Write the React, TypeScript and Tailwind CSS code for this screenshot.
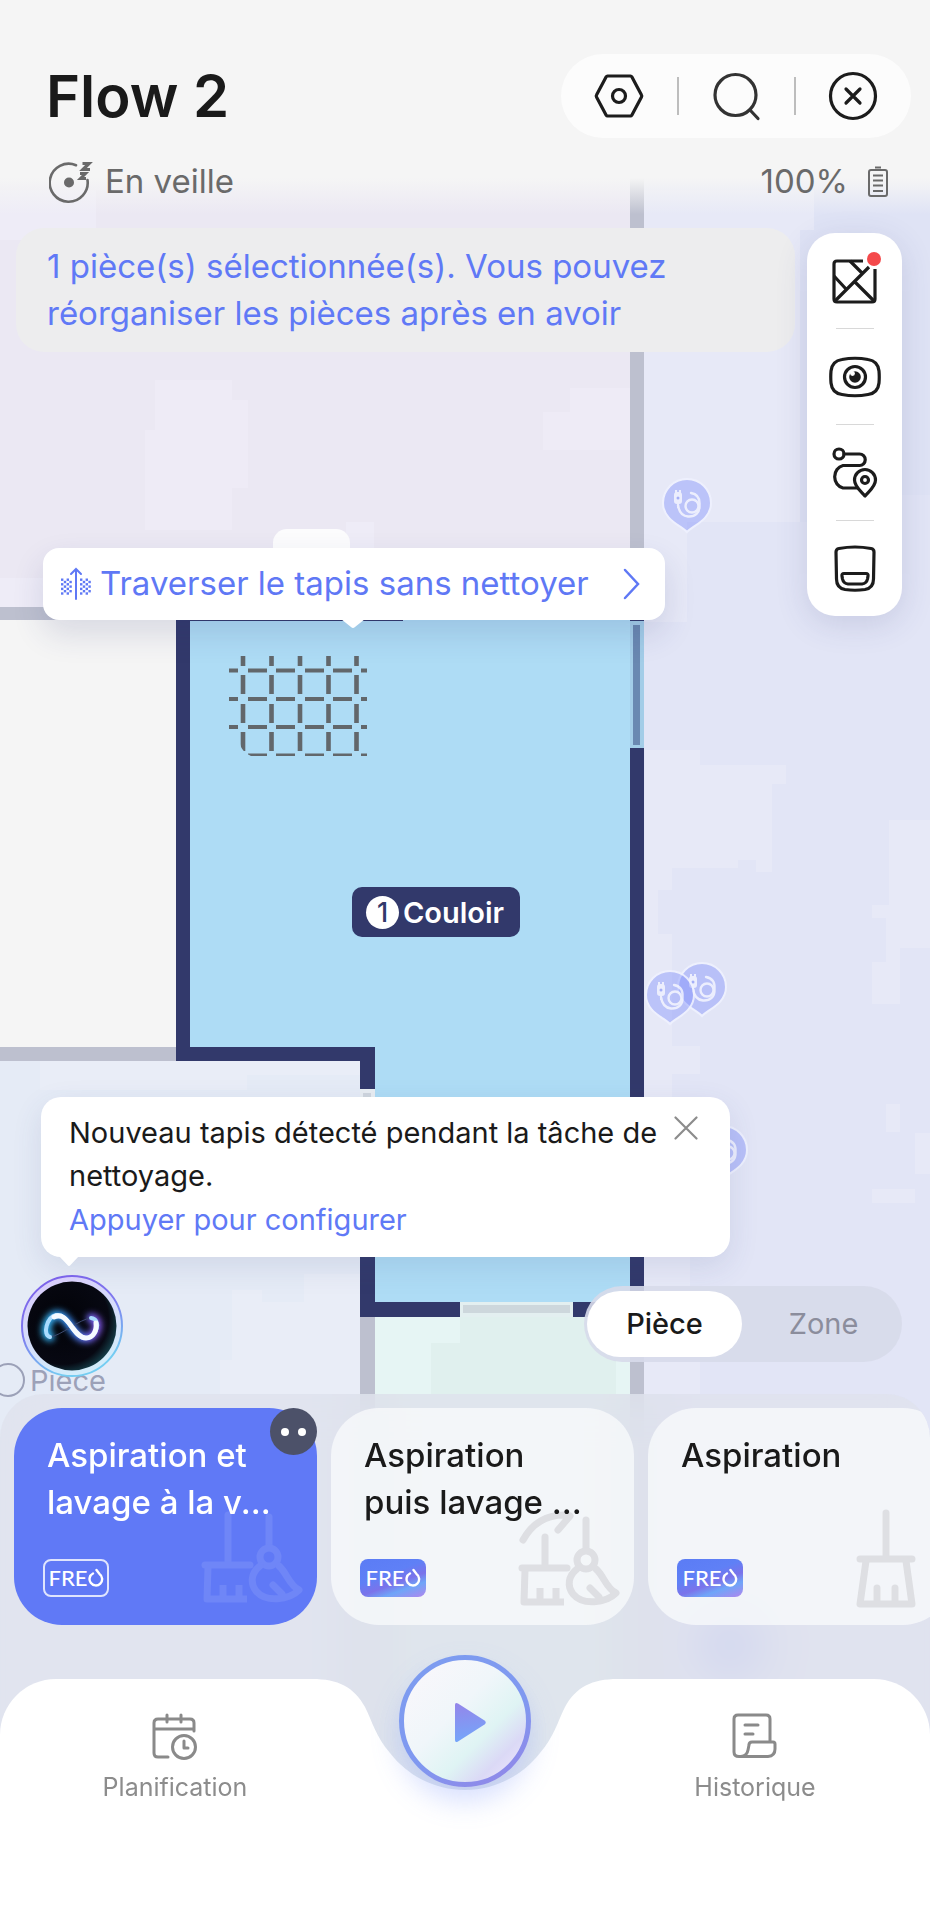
import React from "react";

const NAVY = "#32396b";
const WALL = "#bdc0cf";

function CablePin({ x, y }: { x: number; y: number }) {
  return (
    <g transform={`translate(${x} ${y})`} opacity="0.85">
      <path
        d="M0 28C-5 22-24 16-24-1A24 24 0 1 1 24-1C24 16 5 22 0 28Z"
        fill="#8090fb"
        fillOpacity="0.5"
        stroke="#f0f2ff"
        strokeWidth="2"
      />
      <g fill="none" stroke="#eef0ff" strokeWidth="2.4" strokeLinecap="round">
        <circle cx="5" cy="2" r="6.5" />
        <path d="M4-11C10-10 13-6 12.500 1C13 9 8 13 1 12.500C-5 12-8 8-9 1" />
      </g>
      <rect x="-13" y="-12" width="8" height="12" rx="3" fill="#eef0ff" />
      <path d="M-11-14V-11M-7-14V-11M-9 0V4" stroke="#eef0ff" strokeWidth="2" />
      <circle cx="-9" cy="-6" r="1.500" fill="#9aa6f8" />
    </g>
  );
}

function FloorMap() {
  const columns = [243, 271.5, 300, 328.5, 356.5];
  const rows = [670.5, 699, 727];
  return (
    <svg
      className="absolute inset-0 h-full w-full"
      viewBox="0 0 930 1920"
      preserveAspectRatio="xMinYMin slice"
      aria-hidden="true"
    >
      <defs>
        <clipPath id="rug">
          <path d="M229 656H367V756H251C246 754 241 749 240 744H229Z" />
        </clipPath>
      </defs>
      <rect width="930" height="1920" fill="#e2e5f6" />

      <rect width="630" height="607" fill="#ebe8f3" />
      <path d="M155 380H232V400H248V488H232V530H145V430H155Z" fill="#eeebf6" />
      <path d="M570 388H630V450H543V412H570Z" fill="#eeebf6" />
      <path d="M0 190H96V240H0Z M346 522H374V560H346Z M0 578H60V607H0Z" fill="#eeecf7" />

      <path
        d="M644 190H814V230H806V495H844V522H687V622H644Z M645 750H700V765H786V784H772V872H756V860H738V868H672V890H658V934H672V1046H700V1074H672V1195H690V1290H700V1394H644Z"
        fill="#e7e9f7"
      />
      <path
        d="M889 820H930V948H900V1004H872V962H886V918H872V905H889Z M886 1104H900V1132H886Z M915 1133H930V1174H915Z M872 1189H915V1203H872Z"
        fill="#e7e9f7"
      />
      <path d="M814 190H930V495H844V522H800V230H814Z" fill="#dfe3f5" />

      <rect y="620" width="176" height="427" fill="#f5f5f5" />
      <rect y="1061" width="360" height="860" fill="#e5ebf6" />
      <path
        d="M247 1075H360V1061H40V1090H247Z M304 1274H360V1394H220V1360H232V1290H262V1302H304Z"
        fill="#e9edf7"
      />
      <rect x="375" y="1302" width="255" height="620" fill="#e0f0ee" />
      <path d="M375 1317H460V1343H431V1394H375Z M616 1317H630V1394H616Z" fill="#e6f5f4" />

      <g fill={WALL}>
        <rect x="630" width="14" height="620" />
        <rect y="607" width="176" height="13" />
        <rect y="1047" width="176" height="14" />
        <rect x="360" y="1317" width="15" height="603" />
        <rect x="630" y="1317" width="14" height="603" />
      </g>

      <path d="M190 620H644V1302H375V1047H190Z" fill="#aedcf5" />
      <path d="M176 607H403V621H190V1047H375V1089H360V1061H176Z" fill={NAVY} />
      <path
        d="M630 748H644V1317H573V1302H630Z M360 1250H375V1302H460V1317H360Z M630 618H644V621H630Z"
        fill={NAVY}
      />
      <rect x="630" y="621" width="14" height="127" fill="#a3cde8" />
      <rect x="633" y="625" width="7" height="120" fill="#6a88b1" />
      <rect x="360" y="1089" width="15" height="161" fill="#e8edf2" />
      <rect x="363" y="1093" width="8" height="150" fill="#cfd6de" />
      <rect x="460" y="1302" width="113" height="15" fill="#e3eff0" />
      <rect x="463" y="1305" width="107" height="8" fill="#cdd7dc" />

      <g clipPath="url(#rug)" fill="#62676b">
        {columns.map((x) => (
          <g key={x}>
            <rect x={x - 2.3} y="656" width="4.6" height="10" />
            <rect x={x - 2.3} y="675" width="4.6" height="19" />
            <rect x={x - 2.3} y="704" width="4.6" height="19" />
            <rect x={x - 2.3} y="732" width="4.6" height="19" />
          </g>
        ))}
        {[...rows, 755.5].map((y) => (
          <g key={y}>
            <rect x="229" y={y - 2} width="9" height="4" />
            <rect x="248" y={y - 2} width="19" height="4" />
            <rect x="276" y={y - 2} width="19" height="4" />
            <rect x="305" y={y - 2} width="19" height="4" />
            <rect x="333" y={y - 2} width="19" height="4" />
            <rect x="361" y={y - 2} width="6" height="4" />
          </g>
        ))}
      </g>

      <CablePin x={687} y={504} />
      <CablePin x={702} y={988} />
      <CablePin x={670} y={996} />
      <CablePin x={723} y={1151} />
      <circle cx="730" cy="1645" r="34" fill="#aab4fa" />
      <circle cx="8" cy="1380" r="16" fill="none" stroke="#9ca1b8" strokeWidth="2" />
    </svg>
  );
}

function CarpetCrossIcon() {
  const dots: [number, number][] = [];
  for (let r = 0; r < 7; r++) for (let c = 0; c < 4; c++) if ((r + c) % 2 === 0) dots.push([c, r]);
  return (
    <svg className="shrink-0" width="32" height="34" viewBox="0 0 32 34" aria-hidden="true">
      <path d="M16 32V2M11 7L16 2L21 7" fill="none" stroke="#5f78f5" strokeWidth="2" strokeLinecap="round" />
      {dots.map(([c, r]) => (
        <g key={`${c}-${r}`} fill="#5f78f5">
          <rect x={1 + c * 2.8} y={11.5 + r * 2.3} width="2.400" height="2.400" />
          <rect x={20 + c * 2.8} y={11.5 + r * 2.3} width="2.400" height="2.400" />
        </g>
      ))}
    </svg>
  );
}

function SleepIcon() {
  return (
    <svg width="44" height="44" viewBox="0 0 44 44" fill="none" stroke="#6a6a6a" aria-hidden="true">
      <path d="M27 5.200A19 19 0 1 0 38.500 20" strokeWidth="2.600" strokeLinecap="round" />
      <circle cx="20" cy="22.500" r="5" fill="#6a6a6a" stroke="none" />
      <path d="M33.500 3.500H40L34 9.500H41" strokeWidth="3.200" />
      <path d="M31 13.500H36.500L31.500 18.500H37" strokeWidth="3" />
    </svg>
  );
}

function BatteryIcon() {
  return (
    <svg width="20" height="32" viewBox="0 0 20 32" fill="none" stroke="#6a6a6a" strokeWidth="2" aria-hidden="true">
      <path d="M7 1.500H13" />
      <rect x="1" y="4" width="18" height="26" rx="2" />
      <path d="M5 9.500H15M5 14.500H15M5 19.500H15M5 25H15" />
    </svg>
  );
}

const iconProps = {
  width: 52,
  height: 52,
  viewBox: "0 0 52 52",
  fill: "none",
  stroke: "#1c1c1c",
  strokeWidth: 3.2,
  strokeLinecap: "round" as const,
  strokeLinejoin: "round" as const,
  "aria-hidden": true,
};

function HexIcon() {
  return (
    <svg {...iconProps}>
      <path d="M14.500 6H37.500C38 6 38.500 6.300 38.800 6.800L48.500 25C48.900 25.700 48.900 26.300 48.500 27L38.800 45.200C38.500 45.700 38 46 37.500 46H14.500C14 46 13.500 45.700 13.200 45.200L3.500 27C3.100 26.300 3.100 25.700 3.500 25L13.200 6.800C13.500 6.300 14 6 14.500 6Z" />
      <circle cx="26" cy="26" r="6.500" />
    </svg>
  );
}

function SearchIcon() {
  return (
    <svg {...iconProps} stroke="#333333">
      <circle cx="25.500" cy="25" r="20.500" />
      <path d="M40 40L48 48.500" />
    </svg>
  );
}

function CloseCircleIcon() {
  return (
    <svg {...iconProps}>
      <circle cx="26" cy="26" r="22.500" />
      <path d="M19 19L33 33M33 19L19 33" />
    </svg>
  );
}

function MapIcon() {
  return (
    <svg {...iconProps}>
      <path d="M34 6H8C6 6 5 7 5 9V44C5 46 6 47 8 47H43C45 47 46 46 46 44V14" strokeLinecap="butt" />
      <path d="M6 46L40 12M21 6L33 18M5 21L17 34M25 26L45 46" strokeLinecap="butt" />
    </svg>
  );
}

function CameraIcon() {
  return (
    <svg {...iconProps}>
      <path d="M13 8.500Q26 6 39 8.500Q49 10 50 20Q50.500 26 50 32Q49 42 39 43.500Q26 46 13 43.500Q3 42 2 32Q1.500 26 2 20Q3 10 13 8.500Z" />
      <circle cx="26" cy="26" r="10.500" />
      <circle cx="26" cy="26" r="5.800" fill="#1c1c1c" stroke="none" />
      <circle cx="23.500" cy="22.500" r="2.400" fill="#ffffff" stroke="none" />
    </svg>
  );
}

function RouteIcon() {
  return (
    <svg {...iconProps}>
      <circle cx="10" cy="7" r="5" />
      <path d="M15 7H30.500A5.500 5.500 0 0 1 30.500 18.500H14A10.500 11.500 0 0 0 14 41H28" />
      <path d="M36 49C33 45 25.500 40 25.500 33A10.500 10.500 0 0 1 46.500 33C46.500 40 39 45 36 49Z" fill="#ffffff" />
      <circle cx="36" cy="33" r="3.500" />
    </svg>
  );
}

function DockIcon() {
  return (
    <svg {...iconProps}>
      <path d="M10 5.500Q26 2.500 42 5.500Q45 6 45 9L44.500 36Q44.500 45 36 46.500Q26 48 16 46.500Q7.500 45 7.500 36L7 9Q7 6 10 5.500Z" />
      <path d="M15 30.500H37Q39.500 30.500 39 33L38.500 36Q37.500 40.500 33 41H19Q14.500 40.500 13.500 36L13 33Q12.500 30.500 15 30.500Z" />
    </svg>
  );
}

function FreoBadge({ outlined }: { outlined?: boolean }) {
  return (
    <span
      className={
        outlined
          ? "flex h-[38px] w-[66px] items-center justify-center rounded-lg border-2 border-white/80 text-white"
          : "flex h-[38px] w-[66px] items-center justify-center rounded-lg bg-[linear-gradient(160deg,#5b7cf5_0%,#5f80f6_40%,#7b73ea_60%,#6fa5f8_75%,#b086ee_100%)] text-white"
      }
    >
      <span className="font-['Lato',sans-serif] text-[22px] leading-none font-medium">FRE</span>
      <svg width="16" height="20" viewBox="0 0 16 20" fill="none" stroke="currentColor" strokeWidth="2.400" aria-hidden="true">
        <path d="M5 5.500A6.300 6.300 0 1 0 11.500 6L8.500 2" strokeLinecap="round" />
      </svg>
    </span>
  );
}

function BroomMopIcon({ curved }: { curved?: boolean }) {
  return (
    <svg
      width="104"
      height="98"
      viewBox="0 0 104 98"
      fill="none"
      stroke="currentColor"
      strokeWidth="7"
      strokeLinejoin="round"
      aria-hidden="true"
    >
      {curved && <path d="M5 30C15 12 30 5 46 5M52 6L40 20" strokeLinecap="round" />}
      <path d={curved ? "M27 27V57" : "M27 8V57"} strokeLinecap="round" />
      <path d="M4 58H49" strokeLinecap="round" />
      <path d="M7 60L6 92H46M22 92V78M38 92V78" />
      <path d="M68 10V40" strokeLinecap="round" />
      <circle cx="68" cy="50" r="9" />
      <path d="M59 59C50 66 49 76 55 84C65 96 88 93 98 83C88 78 86 66 78 59M72 78L81 87" strokeLinecap="round" />
    </svg>
  );
}

function BroomIcon() {
  return (
    <svg
      width="62"
      height="100"
      viewBox="0 0 62 100"
      fill="none"
      stroke="currentColor"
      strokeWidth="7"
      strokeLinejoin="round"
      aria-hidden="true"
    >
      <path d="M31 5V50M5 51H57" strokeLinecap="round" />
      <path d="M11 53L5 96H57L51 53M22 95V80M40 95V80" strokeLinecap="round" />
    </svg>
  );
}

function CalendarIcon() {
  return (
    <svg width="48" height="48" viewBox="0 0 48 48" fill="none" stroke="#8a8a8a" strokeWidth="3" strokeLinecap="round" strokeLinejoin="round" aria-hidden="true">
      <path d="M17 44H7Q3 44 3 40V10Q3 6 7 6H39Q43 6 43 10V18M3 16H43M16 2V9M30 2V9" />
      <circle cx="33" cy="34" r="11.500" />
      <path d="M33 28V35H37" />
    </svg>
  );
}

function HistoryIcon() {
  return (
    <svg width="48" height="48" viewBox="0 0 48 48" fill="none" stroke="#8a8a8a" strokeWidth="3" strokeLinecap="round" strokeLinejoin="round" aria-hidden="true">
      <path d="M39 28V6Q39 2 35 2H7Q3 2 3 6V39Q3 43.500 8 43.500H37Q44 43 44 36V31Q44 29 42 29H21Q18 29 18 32L17 37Q16 43 10 43.500" />
      <path d="M14 12H27M14 21H22" />
    </svg>
  );
}

function Avatar() {
  return (
    <button aria-label="Assistant" className="h-[102px] w-[102px] shrink-0 rounded-full">
      <svg width="102" height="102" viewBox="0 0 102 102" aria-hidden="true">
        <defs>
          <linearGradient id="ring" x1="0" y1="0" x2="0.4" y2="1">
            <stop offset="0" stopColor="#7a5be8" />
            <stop offset="0.5" stopColor="#7f78ee" />
            <stop offset="1" stopColor="#74cdf2" />
          </linearGradient>
          <linearGradient id="halo" x1="0" y1="0" x2="0.4" y2="1">
            <stop offset="0" stopColor="#d9c9fb" />
            <stop offset="1" stopColor="#d3ecfa" />
          </linearGradient>
          <radialGradient id="face" cx="0.4" cy="0.42" r="0.68">
            <stop offset="0" stopColor="#020308" />
            <stop offset="0.75" stopColor="#070812" />
            <stop offset="1" stopColor="#1a5560" />
          </radialGradient>
          <linearGradient id="loop" x1="0" y1="0" x2="1" y2="0">
            <stop offset="0" stopColor="#35b8f5" />
            <stop offset="0.5" stopColor="#3d8dff" />
            <stop offset="1" stopColor="#8a5cf6" />
          </linearGradient>
          <filter id="glow" x="-30%" y="-60%" width="160%" height="220%">
            <feGaussianBlur stdDeviation="3" />
          </filter>
        </defs>
        <circle cx="51" cy="51" r="50" fill="url(#halo)" stroke="url(#ring)" strokeWidth="2" />
        <circle cx="51" cy="51" r="44.500" fill="url(#face)" />
        <g fill="none" strokeLinecap="round">
          <path d="M29 62C21 60 26 42 35 40C48 38 51 63 65 63C76 63 81 44 70 43" stroke="url(#loop)" strokeWidth="9" filter="url(#glow)" />
          <path d="M29 62C40 61 58 44 70 43" stroke="#3d4a70" strokeWidth="1" />
          <path d="M29 62C21 60 26 42 35 40C48 38 51 63 65 63C76 63 81 44 70 43" stroke="#a9dcff" strokeWidth="4" />
          <path d="M33 42C47 35 52 63 65 63C72 63 76 56 75 48" stroke="#f5faff" strokeWidth="5" />
        </g>
      </svg>
    </button>
  );
}

const modes = [
  { id: "both", lines: ["Aspiration et", "lavage à la v..."], active: true },
  { id: "then", lines: ["Aspiration", "puis lavage ..."], active: false },
  { id: "vacuum", lines: ["Aspiration"], active: false },
];

export default function App() {
  return (
    <div className="relative flex min-h-screen w-full flex-col overflow-hidden bg-[#e2e5f6] font-['Inter',sans-serif] text-[#1a1a1a]">
      <div className="absolute inset-0">
        <FloorMap />
        <span className="absolute top-[1364px] left-[30px] text-[29px] leading-[34px] text-[#9ca1b8]">Pièce</span>
        <div className="absolute top-[887px] left-[352px] flex h-[50px] items-center gap-1 rounded-[10px] bg-[#32396b] pr-4 pl-3.5 text-white">
          <span className="flex h-[33px] w-[33px] items-center justify-center rounded-full bg-white text-[27px] leading-none font-medium text-[#32396b]">
            1
          </span>
          <span className="text-[29px] leading-none font-semibold">Couloir</span>
        </div>
        <div className="absolute top-[529px] left-[273px] h-[40px] w-[77px] rounded-[14px] bg-[#fcfcfd]" />
        <div className="absolute top-[548px] left-[43px]">
          <button className="flex h-[72px] w-[622px] items-center gap-2 rounded-2xl bg-white pr-6 pl-[17px] text-[33px] text-[#5f78f5] shadow-[0_14px_32px_rgba(40,50,110,0.14)]">
            <CarpetCrossIcon />
            <span className="flex-1 text-left whitespace-nowrap">Traverser le tapis sans nettoyer</span>
            <svg className="shrink-0" width="18" height="32" viewBox="0 0 18 32" fill="none" stroke="currentColor" strokeWidth="2.500" aria-hidden="true">
              <path d="M2 2L15 16L2 30" strokeLinecap="round" />
            </svg>
          </button>
          <svg className="absolute top-[71px] left-[298px]" width="24" height="10" viewBox="0 0 24 10" aria-hidden="true">
            <path d="M0 0H24L14 8Q12 10 10 8Z" fill="#ffffff" />
          </svg>
        </div>
      </div>

      <header className="relative bg-[linear-gradient(#f5f5f5_0%,#f5f5f5_78%,rgba(245,245,245,0)_94%)] pt-[54px] pb-6">
        <div className="flex h-[84px] items-center justify-between pr-[19px] pl-[46px]">
          <h1 className="text-[58px] leading-none font-semibold">Flow 2</h1>
          <div className="flex h-[84px] w-[350px] items-center justify-between rounded-full bg-[#fcfcfc] px-8">
            <button aria-label="Réglages">
              <HexIcon />
            </button>
            <span className="h-[38px] w-0.5 bg-[#bdbdbd]" />
            <button aria-label="Rechercher">
              <SearchIcon />
            </button>
            <span className="h-[38px] w-0.5 bg-[#bdbdbd]" />
            <button aria-label="Fermer">
              <CloseCircleIcon />
            </button>
          </div>
        </div>
        <div className="mt-[22px] flex h-[44px] items-center justify-between pr-[42px] pl-[49px] text-[33px] text-[#6a6a6a]">
          <span className="flex items-center gap-3">
            <SleepIcon />
            En veille
          </span>
          <span className="flex items-center gap-5">
            100%
            <BatteryIcon />
          </span>
        </div>
      </header>

      <div className="relative flex items-start gap-3 pr-7 pl-4">
        <p className="flex-1 rounded-[28px] bg-[#ededee] px-[31px] py-[15px] text-[33px] leading-[47px] text-[#6079f6]">
          1 pièce(s) sélectionnée(s). Vous pouvez réorganiser les pièces après en avoir
        </p>
        <div className="mt-[5px] flex w-[95px] flex-col items-center rounded-[28px] bg-white shadow-[0_8px_32px_rgba(60,70,130,0.16)]">
          <button aria-label="Carte" className="relative flex h-[95px] items-center">
            <MapIcon />
            <span className="absolute top-[19px] right-0 h-[14px] w-[14px] rounded-full bg-[#f4494b]" />
          </button>
          <span className="h-px w-[38px] bg-[#d8d8d8]" />
          <button aria-label="Caméra" className="flex h-[95px] items-center">
            <CameraIcon />
          </button>
          <span className="h-px w-[38px] bg-[#d8d8d8]" />
          <button aria-label="Trajet" className="flex h-[95px] items-center">
            <RouteIcon />
          </button>
          <span className="h-px w-[38px] bg-[#d8d8d8]" />
          <button aria-label="Station" className="flex h-[95px] items-center">
            <DockIcon />
          </button>
        </div>
      </div>

      <div className="flex-1" />

      <section className="relative mr-[200px] ml-[41px] rounded-[20px] bg-white pt-[14px] pr-8 pb-[15px] pl-7 text-[29px] shadow-[0_10px_30px_rgba(60,70,130,0.12)]">
        <div className="flex items-start gap-1">
          <p className="flex-1 leading-[43px]">Nouveau tapis détecté pendant la tâche de nettoyage.</p>
          <button aria-label="Fermer le message" className="mt-[5px]">
            <svg width="24" height="24" viewBox="0 0 24 24" stroke="#8c8c8c" strokeWidth="2.200" strokeLinecap="round" aria-hidden="true">
              <path d="M1.500 1.500L22.500 22.500M22.500 1.500L1.500 22.500" />
            </svg>
          </button>
        </div>
        <a href="#configurer" className="block leading-[45px] text-[#6079f6]">
          Appuyer pour configurer
        </a>
        <svg className="absolute top-full left-[18px] -mt-px" width="20" height="11" viewBox="0 0 20 11" aria-hidden="true">
          <path d="M0 0H20L11.500 9Q10 11 8.500 9Z" fill="#ffffff" />
        </svg>
      </section>

      <div className="relative mt-[18px] mb-[17px] flex h-[102px] items-start justify-between pr-7 pl-[21px]">
        <Avatar />
        <div className="mt-[11px] flex h-[76px] w-[318px] items-center rounded-full bg-[#d7daea]/90 pr-[5px] pl-[3px] text-[29px]">
          <button className="h-[66px] w-[155px] rounded-full bg-white font-medium">Pièce</button>
          <button className="h-[66px] flex-1 pl-2 text-[#8b8d9c]">Zone</button>
        </div>
      </div>

      <div className="relative overflow-hidden rounded-t-[44px] bg-[#dfe1ec]/75 backdrop-blur-xl">
        <div className="flex gap-[14px] overflow-hidden pt-[14px] pb-[54px] pl-[14px]">
          {modes.map((mode) => (
            <button
              key={mode.id}
              className={
                mode.active
                  ? "relative flex h-[217px] w-[303px] shrink-0 flex-col justify-between rounded-[48px] bg-[#6079f6] pt-6 pb-[28px] pl-[29px] text-left text-white"
                  : "relative flex h-[217px] w-[303px] shrink-0 flex-col justify-between rounded-[48px] bg-[#f8f9fb]/80 pt-6 pb-[28px] pl-[29px] text-left text-[#1a1a1a]"
              }
            >
              <span
                className={
                  mode.active
                    ? "absolute right-[12px] bottom-[20px] text-[#6f86f7]"
                    : mode.id === "then"
                      ? "absolute right-[12px] bottom-[17px] text-[#dedfe3]"
                      : "absolute right-[34px] bottom-[17px] text-[#dedfe3]"
                }
              >
                {mode.id === "vacuum" ? <BroomIcon /> : <BroomMopIcon curved={mode.id === "then"} />}
              </span>
              <span className="relative pl-1 text-[33px] leading-[47px] font-medium">
                {mode.lines.map((line) => (
                  <span key={line} className="block whitespace-nowrap">
                    {line}
                  </span>
                ))}
              </span>
              <FreoBadge outlined={mode.active} />
              {mode.active && (
                <span className="absolute top-0 right-0 flex h-[47px] w-[47px] items-center justify-center gap-[9px] rounded-full bg-[#4c5169]">
                  <span className="h-2 w-2 rounded-full bg-white" />
                  <span className="h-2 w-2 rounded-full bg-white" />
                </span>
              )}
            </button>
          ))}
        </div>

        <nav className="relative flex h-[241px] items-start text-[25px] text-[#8c8c8c]">
          <div className="absolute inset-0 flex">
            <div className="flex-1 rounded-tl-[56px] bg-white" />
            <svg width="330" height="241" viewBox="0 0 330 241" aria-hidden="true">
              <path
                d="M0 0H12C38 0 54 8 65 28C72 42 76 58 90 74C107 96 134 111 165 111C196 111 223 96 240 74C254 58 258 42 265 28C276 8 292 0 318 0H330V241H0Z"
                fill="#ffffff"
              />
            </svg>
            <div className="flex-1 rounded-tr-[56px] bg-white" />
          </div>
          <a href="#planification" className="relative flex flex-1 flex-col items-center pt-[34px] leading-[32px]">
            <CalendarIcon />
            <span className="mt-2.5">Planification</span>
          </a>
          <div className="relative -mt-[24px] flex w-[230px] justify-center">
            <button
              aria-label="Démarrer"
              className="h-[132px] w-[132px] rounded-full shadow-[0_14px_28px_rgba(110,140,250,0.28)]"
            >
              <svg width="132" height="132" viewBox="0 0 132 132" aria-hidden="true">
                <defs>
                  <linearGradient id="disc" x1="0.15" y1="0.1" x2="0.9" y2="0.85">
                    <stop offset="0" stopColor="#f8f7fb" />
                    <stop offset="0.4" stopColor="#f0f6fa" />
                    <stop offset="0.68" stopColor="#dff4f4" />
                    <stop offset="0.88" stopColor="#dbd9f6" />
                    <stop offset="1" stopColor="#e6e2fa" />
                  </linearGradient>
                  <linearGradient id="rim" x1="0.2" y1="0" x2="0.8" y2="1">
                    <stop offset="0" stopColor="#7d9cf0" />
                    <stop offset="0.6" stopColor="#8098f0" />
                    <stop offset="1" stopColor="#9088e8" />
                  </linearGradient>
                  <linearGradient id="tri" x1="0.2" y1="0" x2="0.3" y2="1">
                    <stop offset="0" stopColor="#9486ea" />
                    <stop offset="1" stopColor="#74a6fa" />
                  </linearGradient>
                </defs>
                <circle cx="66" cy="66" r="63.500" fill="url(#disc)" stroke="url(#rim)" strokeWidth="5" />
                <path d="M56 50V85Q56 88 59 86.500L85.500 69.500Q88 67.500 85.500 65.500L59 48.500Q56 47 56 50Z" fill="url(#tri)" />
              </svg>
            </button>
          </div>
          <a href="#historique" className="relative flex flex-1 flex-col items-center pt-[34px] leading-[32px]">
            <HistoryIcon />
            <span className="mt-2.5">Historique</span>
          </a>
        </nav>
      </div>
    </div>
  );
}
